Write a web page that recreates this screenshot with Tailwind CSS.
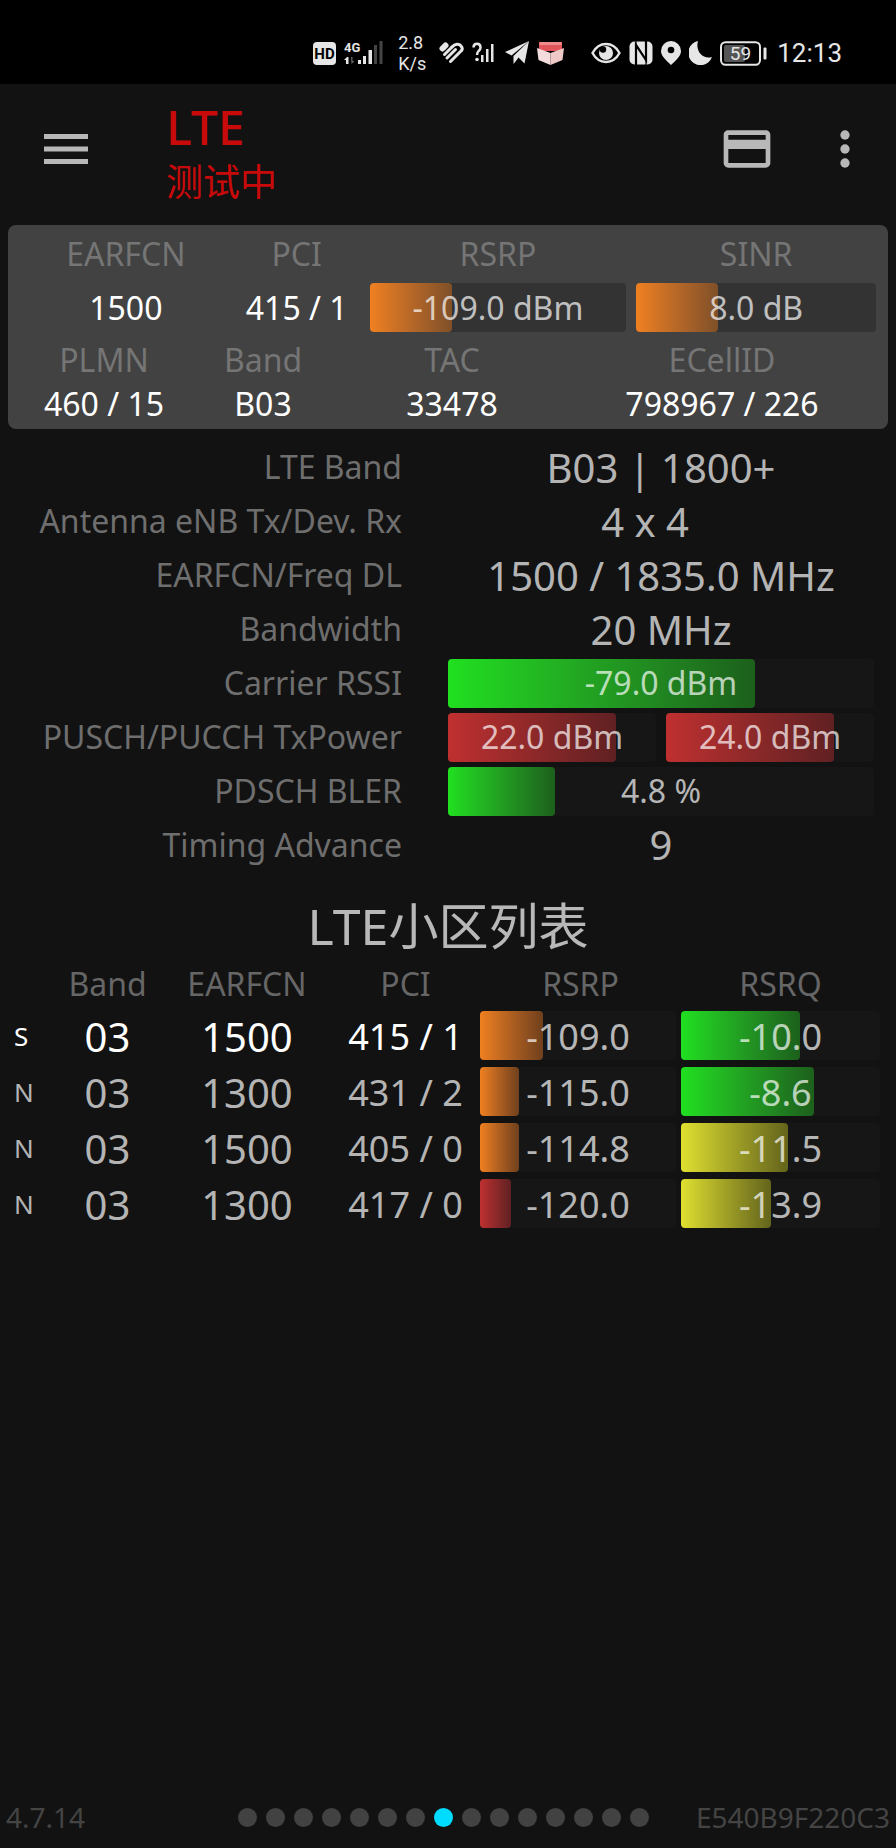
<!DOCTYPE html>
<html lang="zh-CN">
<head>
  <meta charset="UTF-8" />
  <meta name="viewport" content="width=device-width, initial-scale=1.0" />
  <title>LTE</title>
  <script src="https://cdn.jsdelivr.net/npm/@tailwindcss/browser@4"></script>
</head>
<body class="min-h-screen flex flex-col bg-[#121212] text-white/70 font-['Noto_Sans','Noto_Sans_CJK_SC',sans-serif]">

  <!-- Status bar -->
  <div class="bg-black text-[#e6e6e6] h-[84px] pt-[22px] pr-[54px] flex items-center justify-end gap-2 font-[Roboto,sans-serif]">
    <svg class="w-[23px] h-[23px]" viewBox="0 0 23 23"><rect width="23" height="23" rx="4" fill="#e6e6e6"/><text x="11.5" y="17" font-size="15" font-weight="700" text-anchor="middle" fill="#000">HD</text></svg>
    <svg class="w-[39px] h-[26px]" viewBox="0 0 39 26" fill="#e6e6e6">
      <text x="0" y="12" font-size="13" font-weight="700">4G</text>
      <path d="M3 17l-3 3h2v4h2.500v-7z"/><path d="M7 17h1.500v4h2l-3 3z" fill="#666"/>
      <rect x="14" y="20" width="3" height="4"/><rect x="19" y="16" width="3" height="8"/><rect x="24.500" y="10" width="3.500" height="14"/>
      <rect x="30" y="5" width="3" height="19" fill="#444"/><rect x="35.500" y="1" width="3" height="23" fill="#444"/>
    </svg>
    <div class="w-[26px] mx-[7px] text-[18px] leading-[21px]">2.8<br>K/s</div>
    <svg class="w-[25px] h-[22px]" viewBox="0 0 25 22" fill="none" stroke="#e6e6e6" stroke-width="3" stroke-linecap="round">
      <path d="M3.500 6.500L6.500 3.500" stroke-width="6"/><path d="M5.500 12.500L13 5"/><path d="M8 16L16.500 7.500"/><path d="M11.500 19.500L22.500 8.500"/><path d="M13 5c3-3.500 7-3.500 9-1s1.500 3.500.5 4.500"/>
    </svg>
    <svg class="w-[22px] h-[22px]" viewBox="0 0 22 22" fill="#e6e6e6">
      <path d="M1.500 5.500c0-5 7-5 7 0 0 3.500-3.500 3-3.500 7.500" fill="none" stroke="#e6e6e6" stroke-width="2.500"/><circle cx="5" cy="17.500" r="1.800"/>
      <rect x="9" y="13" width="2.500" height="7"/><rect x="14" y="7" width="2.500" height="13"/><rect x="19" y="2" width="2.500" height="18"/>
    </svg>
    <svg class="w-[24px] h-[24px] ml-[3px]" viewBox="0 0 24 24" fill="#e6e6e6"><path d="M24 0L0 11l6.500 3.500z"/><path d="M24 0L8.500 15v8l4-5z"/><path d="M24 0L12.500 15.500l7 7z"/></svg>
    <svg class="w-[27px] h-[24px]" viewBox="0 0 27 24"><path d="M2 1h23v9H2z" fill="#e0545a"/><path d="M3 1h21l1 3H2z" fill="#f08a8a"/><path d="M0 7l13.500 5v12L1.500 19z" fill="#f5dcdc"/><path d="M27 7l-13.500 5v12L25.500 19z" fill="#efc8c8"/></svg>
    <svg class="w-[30px] h-[22px] ml-[19px]" viewBox="0 0 30 22"><path d="M1.500 11C8-1 22-1 28.500 11 22 23 8 23 1.500 11z" fill="none" stroke="#e6e6e6" stroke-width="2.400"/><circle cx="15" cy="11" r="7" fill="#e6e6e6"/><circle cx="12" cy="7.500" r="3.200" fill="#000"/></svg>
    <svg class="w-[24px] h-[24px]" viewBox="0 0 24 24"><rect x="0.500" y="0.500" width="23" height="23" rx="5" fill="#e6e6e6"/><path d="M7 24V4l10 15V0" fill="none" stroke="#000" stroke-width="2.200"/><path d="M7 0v4l10 15v5" fill="none" stroke="#000" stroke-width="1.200"/></svg>
    <svg class="w-[20px] h-[24px]" viewBox="0 0 20 24"><path d="M10 0a10 10 0 0 1 10 10c0 5.500-6 10-10 14C6 20 0 15.500 0 10A10 10 0 0 1 10 0z" fill="#e6e6e6"/><circle cx="10" cy="9" r="3.300" fill="#000"/></svg>
    <svg class="w-[23px] h-[24px]" viewBox="0 0 23 24"><path d="M9 0A12.200 12.200 0 1 0 23 16 C14 19 6 10 9 0z" fill="#e6e6e6"/></svg>
    <svg class="w-[47px] h-[25px]" viewBox="0 0 47 25"><rect x="1" y="1.200" width="39" height="22.600" rx="4.500" fill="#000" stroke="#e6e6e6" stroke-width="2"/><rect x="4" y="4" width="21" height="17" rx="2" fill="#555"/><text x="20.500" y="19" font-size="19" text-anchor="middle" fill="#e6e6e6">59</text><rect x="43.500" y="6.500" width="3" height="12" rx="1" fill="#e6e6e6"/></svg>
    <div class="text-[26px] leading-8 ml-0.5">12:13</div>
  </div>

  <!-- App bar -->
  <header class="flex items-start pl-[38px] pr-[23px] pt-[17px] pb-3.5">
    <button aria-label="Menu" class="mt-5 size-14 flex items-center justify-center">
      <svg class="w-11 h-[30px]" viewBox="0 0 44 30" fill="#b8b8b8"><path d="M0 0h44v5H0zM0 12.500h44v5H0zM0 25h44v5H0z"/></svg>
    </button>
    <div class="ml-[72px] flex-1 text-[#c80a0a]">
      <h1 class="text-[48px] leading-[52px] font-medium">LTE</h1>
      <p class="text-[37px] leading-[58px]">测试中</p>
    </div>
    <button aria-label="SIM" class="mt-5 mr-[42px] size-14">
      <svg class="size-14" viewBox="0 0 24 24" fill="#b8b8b8"><path d="M20 4H4c-1.110 0-1.990.890-1.990 2L2 18c0 1.110.890 2 2 2h16c1.110 0 2-.890 2-2V6c0-1.110-.890-2-2-2zm0 14H4v-6h16v6zm0-10H4V6h16v2z"/></svg>
    </button>
    <button aria-label="More" class="mt-5 size-14">
      <svg class="size-14" viewBox="0 0 24 24" fill="#b8b8b8"><circle cx="12" cy="6" r="2"/><circle cx="12" cy="12" r="2"/><circle cx="12" cy="18" r="2"/></svg>
    </button>
  </header>

  <main class="flex-1">
    <!-- Serving cell -->
    <section class="mx-2 h-[204px] rounded-lg bg-[#424242] text-[32px] text-center text-white">
      <div class="grid grid-cols-[196fr_126fr_257fr_240fr] gap-x-2.5 pl-5 pr-3 items-center">
        <div class="leading-[58px] text-[#757575]">EARFCN</div>
        <div class="leading-[58px] text-[#757575]">PCI</div>
        <div class="leading-[58px] text-[#757575]">RSRP</div>
        <div class="leading-[58px] text-[#757575]">SINR</div>
        <div>1500</div>
        <div class="whitespace-nowrap">415 / 1</div>
        <div class="relative h-[49px] rounded bg-[#333] flex items-center justify-center">
          <div class="absolute inset-y-0 left-0 rounded bg-linear-to-r from-[#f08020] to-[#805028]" style="width: 32%"></div>
          <span class="relative text-white/70">-109.0 dBm</span>
        </div>
        <div class="relative h-[49px] rounded bg-[#333] flex items-center justify-center">
          <div class="absolute inset-y-0 left-0 rounded bg-linear-to-r from-[#f08020] to-[#805028]" style="width: 34%"></div>
          <span class="relative text-white/70">8.0 dB</span>
        </div>
      </div>
      <div class="grid grid-cols-[172fr_146fr_232fr_308fr] pt-1.5 pl-2.5 pr-3 leading-11">
        <div class="text-[#757575]">PLMN</div>
        <div class="text-[#757575]">Band</div>
        <div class="text-[#757575]">TAC</div>
        <div class="text-[#757575]">ECellID</div>
        <div>460 / 15</div>
        <div>B03</div>
        <div>33478</div>
        <div>798967 / 226</div>
      </div>
    </section>

    <!-- Details -->
    <dl class="mt-[11px] pr-[22px] grid grid-cols-[402fr_426fr] gap-x-[46px] auto-rows-[54px] items-center text-[32px] whitespace-nowrap">
      <dt class="text-right text-[#6e6e6e]">LTE Band</dt>
      <dd class="text-center text-[40px] pt-0.5">B03 | 1800+</dd>
      <dt class="text-right text-[#6e6e6e]">Antenna eNB Tx/Dev. Rx</dt>
      <dd class="text-center text-[40px] pt-0.5 pr-8">4 x 4</dd>
      <dt class="text-right text-[#6e6e6e]">EARFCN/Freq DL</dt>
      <dd class="text-center text-[40px] pt-0.5">1500 / 1835.0 MHz</dd>
      <dt class="text-right text-[#6e6e6e]">Bandwidth</dt>
      <dd class="text-center text-[40px] pt-0.5">20 MHz</dd>
      <dt class="text-right text-[#6e6e6e]">Carrier RSSI</dt>
      <dd class="relative h-[49px] rounded bg-[#161616] flex items-center justify-center">
        <div class="absolute inset-y-0 left-0 rounded bg-linear-to-r from-[#20e020] to-[#1c601c]" style="width: 72%"></div>
        <span class="relative">-79.0 dBm</span>
      </dd>
      <dt class="text-right text-[#6e6e6e]">PUSCH/PUCCH TxPower</dt>
      <dd class="grid grid-cols-2 gap-2.5">
        <div class="relative h-[49px] rounded bg-[#161616] flex items-center justify-center">
          <div class="absolute inset-y-0 left-0 rounded bg-linear-to-r from-[#c03030] to-[#602022]" style="width: 81%"></div>
          <span class="relative">22.0 dBm</span>
        </div>
        <div class="relative h-[49px] rounded bg-[#161616] flex items-center justify-center">
          <div class="absolute inset-y-0 left-0 rounded bg-linear-to-r from-[#c03030] to-[#602022]" style="width: 81%"></div>
          <span class="relative">24.0 dBm</span>
        </div>
      </dd>
      <dt class="text-right text-[#6e6e6e]">PDSCH BLER</dt>
      <dd class="relative h-[49px] rounded bg-[#161616] flex items-center justify-center">
        <div class="absolute inset-y-0 left-0 rounded bg-linear-to-r from-[#20e020] to-[#1c601c]" style="width: 25%"></div>
        <span class="relative">4.8 %</span>
      </dd>
      <dt class="text-right text-[#6e6e6e]">Timing Advance</dt>
      <dd class="text-center text-[40px]">9</dd>
    </dl>

    <!-- Cell list -->
    <h2 class="mt-[19px] text-center text-[50px] leading-[70px]">LTE小区列表</h2>
    <table class="w-full table-fixed text-center whitespace-nowrap">
      <colgroup>
        <col class="w-[52px]" />
        <col class="w-[111px]" />
        <col class="w-[168px]" />
        <col class="w-[149px]" />
        <col class="w-[201px]" />
        <col class="w-[215px]" />
      </colgroup>
      <thead class="text-[32px] leading-[46px] text-[#666]">
        <tr>
          <th></th>
          <th class="font-normal">Band</th>
          <th class="font-normal">EARFCN</th>
          <th class="font-normal">PCI</th>
          <th class="font-normal">RSRP</th>
          <th class="font-normal pr-4">RSRQ</th>
        </tr>
      </thead>
      <tbody id="cellRows"></tbody>
    </table>
  </main>

  <footer class="grid grid-cols-[232fr_auto_242fr] items-center px-1.5 pb-[13px] text-[28px] leading-9 text-[#444]">
    <span>4.7.14</span>
    <div id="pageDots" class="flex gap-[9px]"></div>
    <span class="text-right">E540B9F220C3</span>
  </footer>

  <script>
    const cells = [
      { type: 'S', band: '03', earfcn: 1500, pci: '415 / 1', rsrp: '-109.0', rsrpFill: 32, rsrq: '-10.0', rsrqFill: 60 },
      { type: 'N', band: '03', earfcn: 1300, pci: '431 / 2', rsrp: '-115.0', rsrpFill: 20, rsrq: '-8.6', rsrqFill: 67 },
      { type: 'N', band: '03', earfcn: 1500, pci: '405 / 0', rsrp: '-114.8', rsrpFill: 20, rsrq: '-11.5', rsrqFill: 54 },
      { type: 'N', band: '03', earfcn: 1300, pci: '417 / 0', rsrp: '-120.0', rsrpFill: 16, rsrq: '-13.9', rsrqFill: 45 },
    ];

    function rsrpColor(value) {
      return value <= -120 ? 'from-[#c03030] to-[#602022]' : 'from-[#f08020] to-[#70401c]';
    }

    function rsrqColor(value) {
      return value < -11 ? 'from-[#e0e030] to-[#64641c]' : 'from-[#20e020] to-[#1c601c]';
    }

    function bar(value, fill, color) {
      return `
        <div class="relative h-[49px] pt-0.5 rounded bg-[#161616] flex items-center justify-center text-white/70">
          <div class="absolute inset-y-0 left-0 rounded bg-linear-to-r ${color}" style="width: ${fill}%"></div>
          <span class="relative">${value}</span>
        </div>`;
    }

    cells.forEach(cell => {
      const row = document.createElement('tr');
      row.className = cell.type === 'S' ? 'h-14 text-[36px] leading-[49px] text-white' : 'h-14 text-[36px] leading-[49px]';
      row.innerHTML = `
        <td class="pt-0.5 pl-3.5 text-left text-[26px]">${cell.type}</td>
        <td class="pt-0.5 text-[40px]">${cell.band}</td>
        <td class="pt-0.5 text-[40px]">${cell.earfcn}</td>
        <td class="pt-0.5">${cell.pci}</td>
        <td class="pr-[5px]">${bar(cell.rsrp, cell.rsrpFill, rsrpColor(Number(cell.rsrp)))}</td>
        <td class="pr-4">${bar(cell.rsrq, cell.rsrqFill, rsrqColor(Number(cell.rsrq)))}</td>
      `;
      document.getElementById('cellRows').appendChild(row);
    });

    for (let i = 0; i < 15; i++) {
      const dot = document.createElement('span');
      dot.className = i === 7 ? 'size-[19px] rounded-full bg-[#00dcff]' : 'size-[19px] rounded-full bg-[#424242]';
      document.getElementById('pageDots').appendChild(dot);
    }
  </script>
</body>
</html>
